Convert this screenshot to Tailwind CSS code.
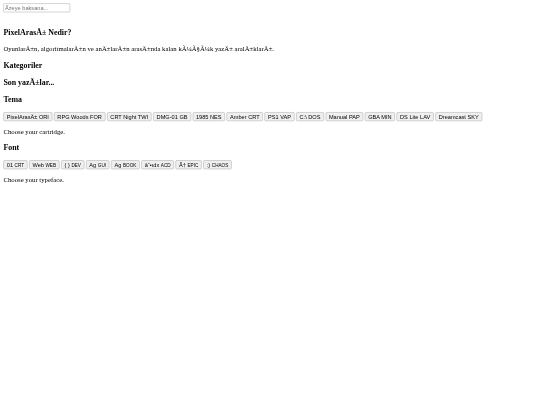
<!DOCTYPE html>
<html lang="tr">
<head>
    <meta charset="UTF-8">
    <title>PixelArası</title>
    <script src="https://cdn.jsdelivr.net/npm/@tailwindcss/browser@4"></script>
</head>
<body class="bg-white text-black font-['Liberation_Serif',serif]">
    <div class="w-[540px] h-[405px] overflow-hidden">
    <!-- page is laid out at 1280 wide and shrunk down like the screenshot -->
    <div class="w-[1280px] h-[960px] overflow-hidden origin-top-left scale-[0.421875] blur-[0.8px] p-2 text-base leading-[normal]">
        <input type="text" placeholder="Âzeye baksana..." class="block w-[158px] h-[21px] px-[3px] border border-[#9a9a9a] rounded-[2px] text-[13.33px] font-['Liberation_Sans',sans-serif] placeholder:text-[#757575]">

        <h3 class="mt-[37px] mb-[18.72px] text-[18.72px] font-bold">PixelArasÄ± Nedir?</h3>
        <p class="my-4">OyunlarÄ±n, algoritmalarÄ±n ve anÄ±larÄ±n arasÄ±nda kalan kÃ¼Ã§Ã¼k yazÄ± aralÄ±klarÄ±.</p>

        <h3 class="my-[18.72px] text-[18.72px] font-bold">Kategoriler</h3>
        <h3 class="my-[18.72px] text-[18.72px] font-bold">Son yazÄ±lar...</h3>

        <h3 class="my-[18.72px] text-[18.72px] font-bold">Tema</h3>
        <div class="flex gap-1 font-['Liberation_Sans',sans-serif] text-[13.33px]">
            <button class="px-[7px] py-[2px] bg-[#efefef] border border-[#9a9a9a] rounded-[3px]">PixelArasÄ± ORI</button>
            <button class="px-[7px] py-[2px] bg-[#efefef] border border-[#9a9a9a] rounded-[3px]">RPG Woods FOR</button>
            <button class="px-[7px] py-[2px] bg-[#efefef] border border-[#9a9a9a] rounded-[3px]">CRT Night TWI</button>
            <button class="px-[7px] py-[2px] bg-[#efefef] border border-[#9a9a9a] rounded-[3px]">DMG-01 GB</button>
            <button class="px-[7px] py-[2px] bg-[#efefef] border border-[#9a9a9a] rounded-[3px]">1985 NES</button>
            <button class="px-[7px] py-[2px] bg-[#efefef] border border-[#9a9a9a] rounded-[3px]">Amber CRT</button>
            <button class="px-[7px] py-[2px] bg-[#efefef] border border-[#9a9a9a] rounded-[3px]">PS1 VAP</button>
            <button class="px-[7px] py-[2px] bg-[#efefef] border border-[#9a9a9a] rounded-[3px]">C:\ DOS</button>
            <button class="px-[7px] py-[2px] bg-[#efefef] border border-[#9a9a9a] rounded-[3px]">Manual PAP</button>
            <button class="px-[7px] py-[2px] bg-[#efefef] border border-[#9a9a9a] rounded-[3px]">GBA MIN</button>
            <button class="px-[7px] py-[2px] bg-[#efefef] border border-[#9a9a9a] rounded-[3px]">DS Lite LAV</button>
            <button class="px-[7px] py-[2px] bg-[#efefef] border border-[#9a9a9a] rounded-[3px]">Dreamcast SKY</button>
        </div>
        <p class="my-4">Choose your cartridge.</p>

        <h3 class="my-[18.72px] text-[18.72px] font-bold">Font</h3>
        <div class="flex gap-1 font-['Liberation_Sans',sans-serif] text-[13.33px]">
            <button class="px-[7px] py-[2px] bg-[#efefef] border border-[#9a9a9a] rounded-[3px]">01 <small class="text-[11px]">CRT</small></button>
            <button class="px-[7px] py-[2px] bg-[#efefef] border border-[#9a9a9a] rounded-[3px]">Web <small class="text-[11px]">WEB</small></button>
            <button class="px-[7px] py-[2px] bg-[#efefef] border border-[#9a9a9a] rounded-[3px]">{ } <small class="text-[11px]">DEV</small></button>
            <button class="px-[7px] py-[2px] bg-[#efefef] border border-[#9a9a9a] rounded-[3px]">Ag <small class="text-[11px]">GUI</small></button>
            <button class="px-[7px] py-[2px] bg-[#efefef] border border-[#9a9a9a] rounded-[3px]">Ag <small class="text-[11px]">BOOK</small></button>
            <button class="px-[7px] py-[2px] bg-[#efefef] border border-[#9a9a9a] rounded-[3px]">â˜•ıdx <small class="text-[11px]">ACD</small></button>
            <button class="px-[7px] py-[2px] bg-[#efefef] border border-[#9a9a9a] rounded-[3px]">Â† <small class="text-[11px]">EPIC</small></button>
            <button class="px-[7px] py-[2px] bg-[#efefef] border border-[#9a9a9a] rounded-[3px]">:) <small class="text-[11px]">CHAOS</small></button>
        </div>
        <p class="my-4">Choose your typeface.</p>
    </div>
    </div>
</body>
</html>
